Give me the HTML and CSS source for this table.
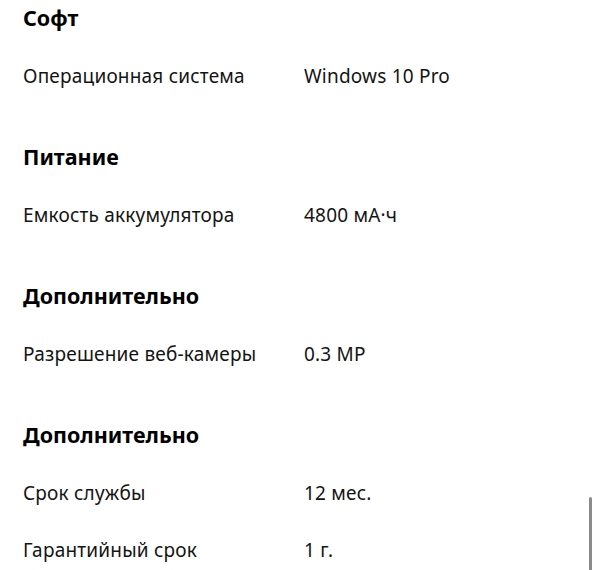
FILE: index.html
```html
<!DOCTYPE html>
<html lang="ru">
<head>
<meta charset="utf-8">
<link rel="stylesheet" href="styles.css">
</head>
<body>
<div class="specs">
  <section class="group">
    <h2 class="title">Софт</h2>
    <div class="row"><span class="label">Операционная система</span><span class="value">Windows 10 Pro</span></div>
  </section>
  <section class="group">
    <h2 class="title">Питание</h2>
    <div class="row"><span class="label">Емкость аккумулятора</span><span class="value">4800 мА·ч</span></div>
  </section>
  <section class="group">
    <h2 class="title">Дополнительно</h2>
    <div class="row"><span class="label">Разрешение веб-камеры</span><span class="value">0.3 MP</span></div>
  </section>
  <section class="group">
    <h2 class="title">Дополнительно</h2>
    <div class="row"><span class="label">Срок службы</span><span class="value">12 мес.</span></div>
    <div class="row"><span class="label">Гарантийный срок</span><span class="value">1 г.</span></div>
  </section>
</div>
<div class="scrollbar"></div>
</body>
</html>
```
FILE: styles.css
```css
html, body {
  margin: 0;
  padding: 0;
  background: #fff;
  overflow: hidden;
}
body {
  font-family: "Noto Sans", "Liberation Sans", sans-serif;
  color: #141414;
  height: 570px;
}
.specs {
  display: flex;
  flex-direction: column;
  gap: 55px;
  padding: 4px 0 0 23px;
}
.title {
  margin: 0;
  font-size: 21.5px;
  font-weight: 700;
  line-height: 28px;
  color: #000;
}
.row {
  display: flex;
  font-size: 19px;
  line-height: 24px;
  letter-spacing: 0.2px;
  margin-top: 32px;
}
.row + .row {
  margin-top: 33px;
}
.label {
  width: 281px;
}
.scrollbar {
  position: absolute;
  right: 5px;
  top: 497px;
  width: 3px;
  height: 80px;
  border-radius: 2px;
  background: #8a8a8a;
}
```
